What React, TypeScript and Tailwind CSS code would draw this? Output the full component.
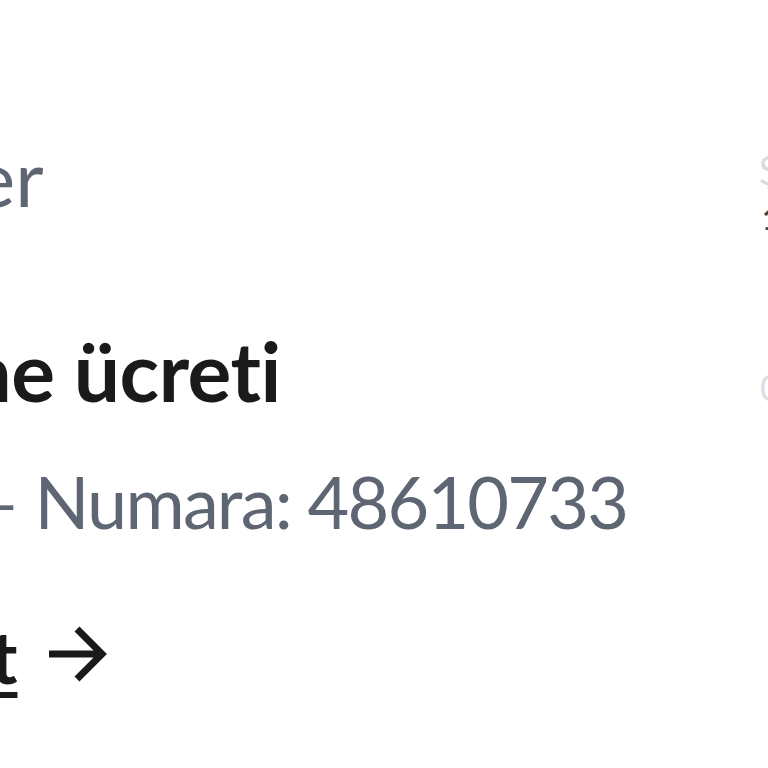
export default function App() {
  return (
    <div className="relative h-[768px] w-[768px] overflow-hidden bg-white font-['Lato',sans-serif] [font-variant-ligatures:none]">
      <div className="flex flex-col">
        <div className="mt-[132px] h-[90px] -ml-[68px] text-[78px] leading-[90px] text-[#5f6673]">
          Ser
        </div>
        <div className="mt-[98px] h-[100px] -ml-[55px] text-[82px] font-bold leading-[100px] tracking-[-0.5px] text-[#1a1a1a]">
          ıne ücreti
        </div>
        <div className="mt-[36px] h-[90px] -ml-[22px] text-[72px] leading-[90px] tracking-[-1.8px] text-[#5f6673] whitespace-nowrap">
          – Numara: 48610733
        </div>
        <div className="mt-[70px] flex h-[80px] items-center -ml-[41px] text-[72px] font-bold leading-[80px] text-[#1a1a1a]">
          <span className="underline decoration-[6px] underline-offset-[8px]">st</span>
          <svg className="ml-[30px] mt-[-4px] h-[60px] w-[60px]" viewBox="0 0 60 60" fill="none" stroke="#1a1a1a" strokeWidth="7">
            <path d="M2 30h52M30 5l25 25-25 25" />
          </svg>
        </div>
      </div>
      <div className="absolute left-[758px] top-[140px] text-[40px] text-[#d8dadd]">$</div>
      <div className="absolute left-[762px] top-[196px] text-[30px] font-bold text-[#444]">1</div>
      <div className="absolute left-[760px] top-[360px] text-[36px] text-[#dcdde0]">0</div>
    </div>
  );
}
